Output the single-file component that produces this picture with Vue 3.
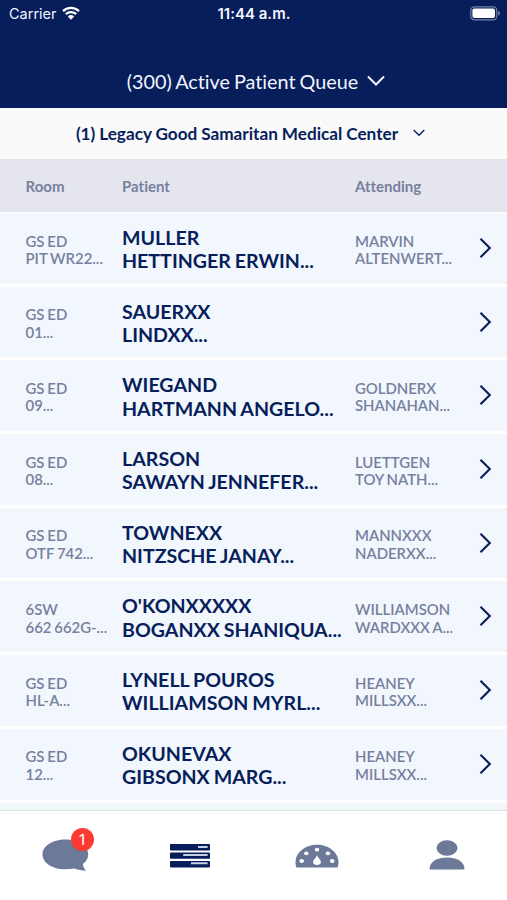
<template>
  <div class="screen">
    <header class="header">
      <div class="status-bar">
        <div class="carrier">
          <span>Carrier</span>
          <svg class="wifi" width="18" height="14" viewBox="0 0 18 14">
            <path d="M1 5.1a11.6 11.6 0 0 1 16 0" />
            <path d="M3.8 8.1a7.6 7.6 0 0 1 10.4 0" />
            <path class="dot" d="M5.8 10.5a4.8 4.8 0 0 1 6.4 0L9 13.8z" />
          </svg>
        </div>
        <span class="clock">11:44 a.m.</span>
        <div class="battery">
          <svg width="31" height="15" viewBox="0 0 31 15">
            <rect class="shell" x="0.8" y="0.8" width="26" height="13" rx="3.6" />
            <rect class="charge" x="2.4" y="2.5" width="22.6" height="9.5" rx="2" />
            <path class="cap" d="M28.2 5v4.6c1.1-.4 1.8-1.3 1.8-2.3s-.7-1.9-1.8-2.3z" />
          </svg>
        </div>
      </div>
      <div class="queue-title">
        <span>(300) Active Patient Queue</span>
        <svg width="18" height="12" viewBox="0 0 18 12">
          <path d="M1 1.5l8 8 8-8" />
        </svg>
      </div>
    </header>

    <div class="facility">
      <span>(1) Legacy Good Samaritan Medical Center</span>
      <svg width="12" height="8" viewBox="0 0 12 8">
        <path d="M.7 1l5.3 5.3L11.3 1" />
      </svg>
    </div>

    <div class="table-head">
      <span>Room</span>
      <span>Patient</span>
      <span>Attending</span>
    </div>

    <main class="list">
      <div v-for="(item, index) in patients" :key="index" class="row">
        <div class="small">
          <div v-for="line in item.room" :key="line">{{ line }}</div>
        </div>
        <div class="name">
          <div v-for="line in item.patient" :key="line">{{ line }}</div>
        </div>
        <div class="small">
          <div v-for="line in item.attending" :key="line">{{ line }}</div>
        </div>
        <svg class="chevron" width="13" height="22" viewBox="0 0 13 22">
          <path d="M1.5 1.8l9.3 9.2-9.3 9.2" />
        </svg>
      </div>
      <div class="row next"></div>
    </main>

    <nav class="tabs">
      <button type="button" class="tab chat">
        <svg width="48" height="33" viewBox="0 0 48 33">
          <path d="M23.200.5c12.800 0 23 6.500 23 14.900 0 3.700-1.900 7-5.300 9.600.1 2.500 1.300 4.700 3.100 6.600-4.200-.1-8-.6-11.500-2.100-2.800.6-5.900.8-9.300.8C10.400 30.300.5 23.700.5 15.400S10.400.5 23.200.5z" />
        </svg>
        <span class="badge">1</span>
      </button>
      <button type="button" class="tab queue">
        <svg width="40" height="24" viewBox="0 0 40 24">
          <rect width="40" height="6.600" rx="0.800" />
          <rect y="8.500" width="40" height="6.300" rx="0.800" />
          <rect y="17" width="40" height="6.400" rx="0.800" />
          <path class="bar" d="M28 3.100h9.600M13.200 11.100h24.400M21 19.200h16.600" />
        </svg>
      </button>
      <button type="button" class="tab gauge">
        <svg width="44" height="24" viewBox="0 0 44 24">
          <path d="M1.500 23.400C.8 22 .5 20.300.5 18.200.5 8.600 10 .7 22 .7s21.500 7.900 21.500 17.500c0 2.100-.3 3.800-1 5.200z" />
          <g class="holes">
            <ellipse cx="22" cy="5.700" rx="2.200" ry="1.900" />
            <ellipse cx="11.300" cy="9.300" rx="2.200" ry="1.900" />
            <ellipse cx="32.900" cy="9.300" rx="2.200" ry="1.900" />
            <ellipse cx="6.700" cy="17.100" rx="2.300" ry="2" />
            <ellipse cx="37.200" cy="17.100" rx="2.300" ry="2" />
            <path d="M22 11c.4 2.500 3.900 4.600 3.900 7.200 0 1.700-1.500 2.700-3.900 2.700s-3.900-1-3.900-2.700c0-2.600 3.500-4.700 3.900-7.200z" />
          </g>
        </svg>
      </button>
      <button type="button" class="tab profile">
        <svg width="36" height="30" viewBox="0 0 36 30">
          <ellipse cx="18" cy="8" rx="10.500" ry="7.700" />
          <path d="M.6 29.600v-1.100C.6 22 8 17.400 18 17.400s17.400 4.600 17.400 11.100v1.100z" />
        </svg>
      </button>
    </nav>
  </div>
</template>

<script setup>
import { ref } from 'vue';

const patients = ref([
  { room: ['GS ED', 'PIT WR22...'], patient: ['MULLER', 'HETTINGER ERWIN...'], attending: ['MARVIN', 'ALTENWERT...'] },
  { room: ['GS ED', '01...'], patient: ['SAUERXX', 'LINDXX...'], attending: [] },
  { room: ['GS ED', '09...'], patient: ['WIEGAND', 'HARTMANN ANGELO...'], attending: ['GOLDNERX', 'SHANAHAN...'] },
  { room: ['GS ED', '08...'], patient: ['LARSON', 'SAWAYN JENNEFER...'], attending: ['LUETTGEN', 'TOY NATH...'] },
  { room: ['GS ED', 'OTF 742...'], patient: ['TOWNEXX', 'NITZSCHE JANAY...'], attending: ['MANNXXX', 'NADERXX...'] },
  { room: ['6SW', '662 662G-...'], patient: ["O'KONXXXXX", 'BOGANXX SHANIQUA...'], attending: ['WILLIAMSON', 'WARDXXX A...'] },
  { room: ['GS ED', 'HL-A...'], patient: ['LYNELL POUROS', 'WILLIAMSON MYRL...'], attending: ['HEANEY', 'MILLSXX...'] },
  { room: ['GS ED', '12...'], patient: ['OKUNEVAX', 'GIBSONX MARG...'], attending: ['HEANEY', 'MILLSXX...'] }
]);
</script>

<style>
body {
  margin: 0;
  background: #fff;
}
</style>

<style scoped>
.screen {
  display: flex;
  flex-direction: column;
  width: 507px;
  height: 900px;
  overflow: hidden;
  background: #fff;
  color: #071e5b;
  font-family: Lato, sans-serif;
  font-variant-ligatures: none;
}

svg {
  display: block;
  flex: none;
}

.header {
  height: 108px;
  flex: none;
  background: #071e5b;
  color: #f2f5ff;
}

.status-bar {
  display: grid;
  grid-template-columns: 1fr auto 1fr;
  align-items: center;
  height: 27px;
  padding: 0 6px 0 9px;
  font-family: Inter, sans-serif;
  font-size: 14.5px;
}

.carrier {
  display: flex;
  align-items: center;
  gap: 5px;
}

.wifi {
  margin-bottom: 2px;
  fill: none;
  stroke: #fff;
  stroke-width: 2.3;
}

.wifi .dot {
  fill: #fff;
  stroke: none;
}

.clock {
  margin-right: 2px;
  font-size: 15px;
  font-weight: 600;
}

.battery {
  display: flex;
  justify-content: flex-end;
}

.shell {
  fill: none;
  stroke: #7482a7;
  stroke-width: 1.2;
}

.charge {
  fill: #fff;
}

.cap {
  fill: #7482a7;
}

.queue-title {
  display: flex;
  justify-content: center;
  align-items: center;
  gap: 9px;
  height: 26px;
  padding: 41px 0 0 5px;
  font-size: 19.8px;
  word-spacing: -1px;
}

.queue-title svg,
.facility svg {
  fill: none;
  stroke: currentColor;
}

.queue-title svg {
  stroke-width: 2;
}

.facility {
  display: flex;
  justify-content: center;
  align-items: center;
  gap: 15px;
  height: 50.5px;
  flex: none;
  padding-right: 6px;
  box-sizing: border-box;
  background: #fafafb;
  font-size: 17.2px;
  font-weight: 700;
  word-spacing: -0.3px;
}

.facility svg {
  stroke-width: 1.3;
}

.table-head {
  display: grid;
  grid-template-columns: 96.5px 233px 1fr;
  align-items: center;
  height: 54.5px;
  flex: none;
  padding: 1.5px 0 0 25.5px;
  box-sizing: border-box;
  border-bottom: 1px solid #fff;
  background: #e5e6ed;
  color: #77809e;
  font-size: 15px;
  font-weight: 700;
}

.list {
  flex: 1;
  min-height: 0;
  overflow: hidden;
}

.row {
  display: grid;
  grid-template-columns: 96.5px 233px 1fr 13px;
  align-items: center;
  height: 73.7px;
  padding: 0 15px 0 25.5px;
  box-sizing: border-box;
  border-bottom: 3px solid #fff;
  background: #f1f7fd;
}

.row.next {
  background: #f0f8fa;
}

.small {
  color: #77809e;
  font-size: 14.9px;
  font-weight: 600;
  line-height: 17.6px;
  padding-top: 3.5px;
  word-spacing: -0.8px;
  white-space: nowrap;
}

.name {
  font-size: 19.6px;
  font-weight: 700;
  line-height: 23.3px;
  padding-top: 2px;
  word-spacing: -0.8px;
  white-space: nowrap;
}

.chevron {
  margin-bottom: 1px;
  fill: none;
  stroke: #071e5b;
  stroke-width: 2.1;
}

.tabs {
  display: flex;
  height: 90px;
  flex: none;
  box-sizing: border-box;
  border-top: 1.5px solid #dce0e3;
  background: #fff;
}

.tab {
  position: relative;
  display: flex;
  flex: 1;
  justify-content: center;
  align-items: center;
  height: 89px;
  padding: 0;
  border: none;
  background: none;
  box-sizing: border-box;
  fill: #6c7998;
}

.chat {
  padding: 0 0 1px 5px;
}

.queue {
  padding-left: 3px;
  fill: #071e5b;
}

.gauge {
  padding-left: 6px;
}

.profile {
  padding: 0 0 2px 9px;
}

.bar {
  stroke: #c5d0e4;
  stroke-width: 2;
}

.holes {
  fill: #fff;
}

.badge {
  position: absolute;
  top: 17px;
  left: 70.5px;
  width: 23px;
  height: 23px;
  border-radius: 50%;
  background: #fb3b32;
  color: #fff;
  font: 15px/23px Inter, sans-serif;
  text-align: center;
}
</style>
